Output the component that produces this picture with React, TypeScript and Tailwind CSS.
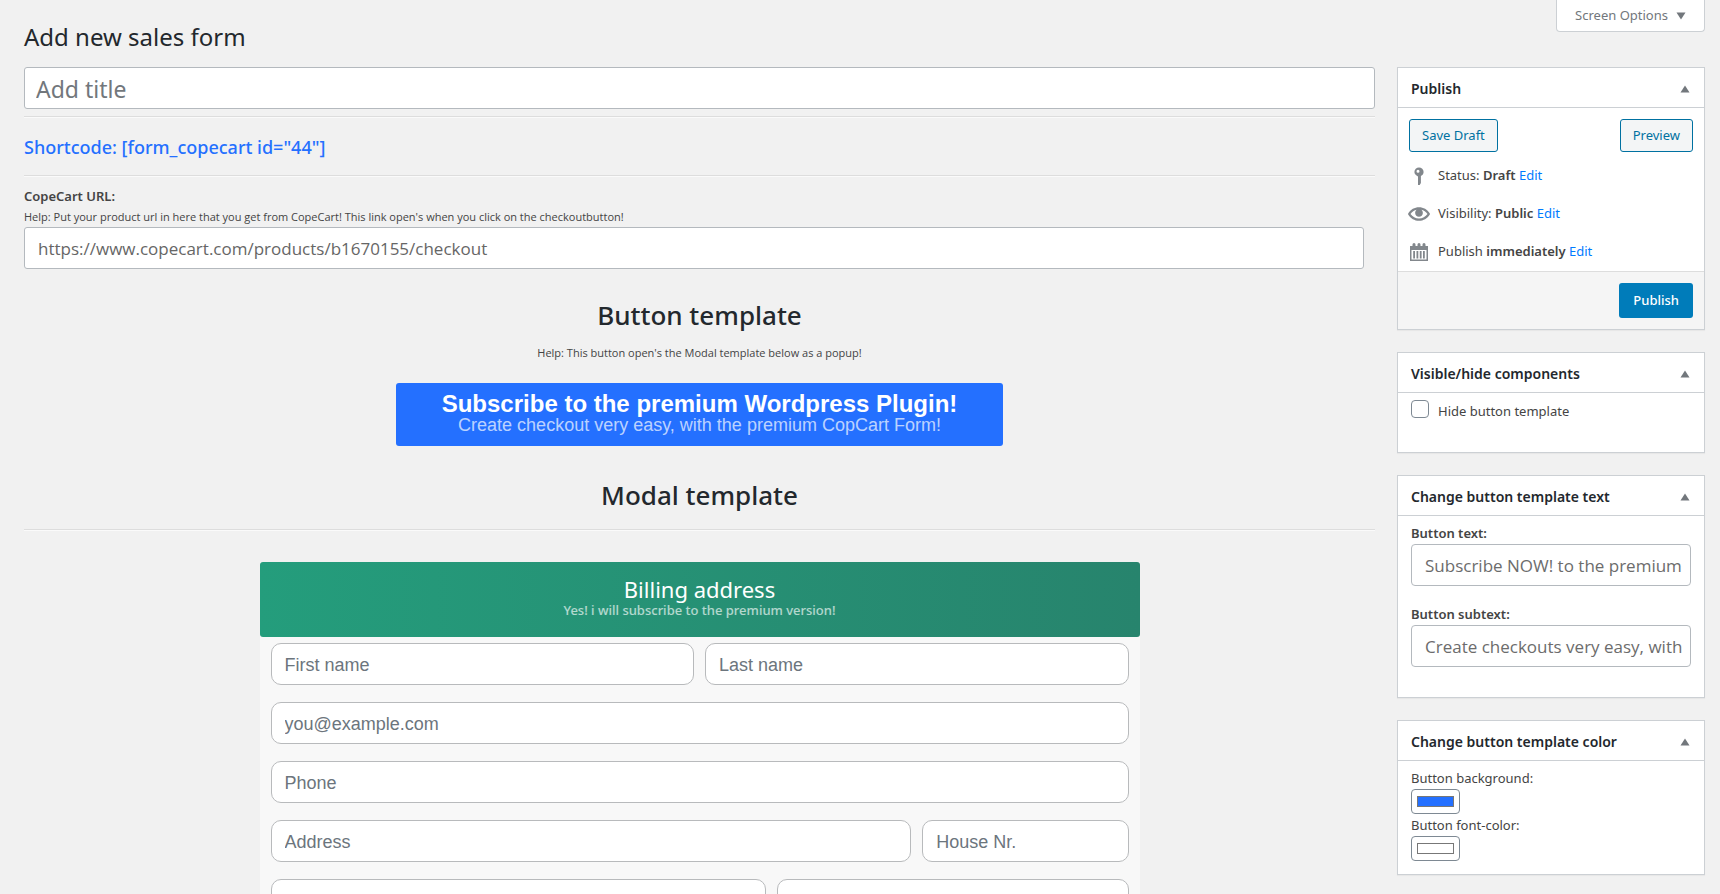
import { useState } from "react";
import type { ReactNode } from "react";

const FONT = "font-['Noto_Sans','Open_Sans',sans-serif]";

function PinIcon() {
  return (
    <svg viewBox="0 0 20 20" className="size-5 shrink-0 fill-[#82878c]" aria-hidden="true">
      <path
        fillRule="evenodd"
        d="M10 1.5a4.6 4.6 0 0 1 4.6 4.6c0 1.9-1.1 3.3-2.7 4V17l-1.2 2H9v-8.600C6.900 9.700 5.400 8 5.400 6.100A4.600 4.600 0 0 1 10 1.500zM9 3.700a1.500 1.500 0 1 0 0 3 1.500 1.500 0 0 0 0-3z"
      />
    </svg>
  );
}

function EyeIcon() {
  return (
    <svg viewBox="0 0 20 20" className="size-[22px] shrink-0 fill-[#82878c]" aria-hidden="true">
      <path d="M19.7 9.4C17.7 6 14 3.9 10 3.9S2.3 6 .3 9.4L0 10l.3.6c2 3.4 5.7 5.5 9.7 5.5s7.7-2.1 9.7-5.500l.3-.6-.3-.6zM10 14.100c-3.100 0-6-1.600-7.700-4.100C3.600 8 5.700 6.600 8 6.100c-.9.6-1.500 1.700-1.500 2.900 0 1.900 1.600 3.500 3.500 3.500s3.500-1.600 3.500-3.500c0-1.200-.6-2.300-1.500-2.900 2.300.5 4.400 1.900 5.700 3.900-1.700 2.500-4.600 4.100-7.700 4.100z" />
    </svg>
  );
}

function CalendarIcon() {
  return (
    <svg viewBox="0 0 20 20" className="size-5 shrink-0 fill-[#82878c]" aria-hidden="true">
      <path
        fillRule="evenodd"
        d="M1 4h2.500V2.500a1.500 1.500 0 0 1 3 0V4h2V2.500a1.500 1.500 0 0 1 3 0V4h2V2.500a1.500 1.500 0 0 1 3 0V4H19v15H1zM2.500 8v9.500h15V8zM4.200 9h1.800v7.500H4.200zM7.500 9h1.800v7.500H7.500zM10.800 9h1.800v7.500h-1.800zM14 9h1.800v7.500H14z"
      />
    </svg>
  );
}

function Panel({ title, children }: { title: string; children: ReactNode }) {
  const [open, setOpen] = useState(true);
  return (
    <section className="border border-[#ccd0d4] bg-white shadow-[0_1px_1px_rgba(0,0,0,0.04)]">
      <div className="flex h-10 items-center justify-between border-b border-[#ccd0d4] pt-0.5 pr-[14px] pl-[13px]">
        <h2 className="text-[14px] leading-5 font-semibold text-[#23282d]">{title}</h2>
        <button type="button" aria-label={`Toggle ${title}`} aria-expanded={open} onClick={() => setOpen(!open)}>
          <svg viewBox="0 0 10 8" className="h-2 w-[10px] fill-[#72777c]" aria-hidden="true">
            <path d="M5 .5 9.5 7.500h-9z" />
          </svg>
        </button>
      </div>
      {open && children}
    </section>
  );
}

function StatusRow({ icon, label, value }: { icon: ReactNode; label: string; value: string }) {
  return (
    <div className="flex h-[18px] items-center gap-2">
      <span className="flex w-[22px] justify-center">{icon}</span>
      <p>
        {label} <b className="font-semibold">{value}</b>{" "}
        <a href="#edit" className="text-[#007bff]">
          Edit
        </a>
      </p>
    </div>
  );
}

function SideField({ id, label, placeholder }: { id: string; label: string; placeholder: string }) {
  return (
    <div>
      <label htmlFor={id} className="block h-[22px] text-[13px] leading-[22px] font-semibold">
        {label}
      </label>
      <input
        id={id}
        type="text"
        placeholder={placeholder}
        className="block h-[42px] w-full rounded-[4px] border border-[#b4b9be] bg-white pr-1 pl-[13px] font-['Open_Sans',sans-serif] text-[17px] text-[#666] placeholder:text-[#6c6c6c]"
      />
    </div>
  );
}

function ColorField({ id, label, value }: { id: string; label: string; value: string }) {
  const [color, setColor] = useState(value);
  return (
    <div>
      <label htmlFor={id} className="block h-[22px] text-[13px] leading-[22px]">
        {label}
      </label>
      <input
        id={id}
        type="color"
        value={color}
        onChange={(e) => setColor(e.target.value)}
        className="block h-[25px] w-[49px] rounded-[4px] border border-[#7e8993] bg-white px-[3px] py-[2px]"
      />
    </div>
  );
}

function BillingField({
  label,
  span,
  type = "text",
  placeholder = label,
}: {
  label: string;
  span: string;
  type?: string;
  placeholder?: string;
}) {
  return (
    <input
      type={type}
      aria-label={label}
      placeholder={placeholder}
      className={`${span} h-[42px] min-w-0 rounded-[10px] border border-[#b8babc] bg-white px-[13px] pt-0.5 font-['Liberation_Sans',sans-serif] text-[18px] text-[#495057] placeholder:text-[#6c757d]`}
    />
  );
}

const rule = "border-t border-b border-t-[#dddddd] border-b-[#fafafa]";
const help = "font-['Open_Sans',sans-serif] text-[11px]";
const outlineButton = "h-[33px] rounded-[3px] border border-[#0071a1] bg-[#f3f5f6] px-3 text-[13px] text-[#0071a1]";

export default function App() {
  return (
    <div className={`h-screen overflow-hidden bg-[#f1f1f1] pr-[15px] pl-6 text-[13px] text-[#444] ${FONT}`}>
      <header className="flex h-[67px] items-start justify-between">
        <h1 className="mt-[21px] text-[24px] leading-8 text-[#23282d]">Add new sales form</h1>
        <button
          type="button"
          className="flex h-8 items-center gap-2 rounded-b-[4px] border border-t-0 border-[#ccd0d4] bg-white px-[18px] text-[13px] text-[#72777c]"
        >
          Screen Options
          <svg viewBox="0 0 10 8" className="h-2 w-[10px] fill-[#72777c]" aria-hidden="true">
            <path d="M.5.5h9L5 7.500z" />
          </svg>
        </button>
      </header>

      <div className="flex items-start gap-[22px]">
        <main className="min-w-0 flex-1">
          <input
            type="text"
            aria-label="Add title"
            placeholder="Add title"
            className="block h-[42px] w-full rounded-[3px] border border-[#b4b9be] bg-white px-[11px] pt-0.5 text-[23px] placeholder:text-[#72777c]"
          />
          <hr className={`mt-[7px] ${rule}`} />
          <p className="pt-[15px] pb-[13px] text-[18px] leading-[29px] font-medium text-[#2470ff]">
            Shortcode: [form_copecart id="44"]
          </p>
          <hr className={rule} />

          <div className="pt-[9px] pr-[11px]">
            <label htmlFor="url" className="block text-[13px] leading-[21px] font-semibold">
              CopeCart URL:
            </label>
            <p className={`pb-px leading-[19px] ${help}`}>
              Help: Put your product url in here that you get from CopeCart! This link open's when you click on the
              checkoutbutton!
            </p>
            <input
              id="url"
              type="url"
              defaultValue="https://www.copecart.com/products/b1670155/checkout"
              className="block h-[42px] w-full rounded-[3px] border border-[#b4b9be] bg-white px-[13px] font-['Open_Sans',sans-serif] text-[17px] text-[#666]"
            />
          </div>

          <section className="flex flex-col items-center pt-7">
            <h2 className="text-[26px] leading-9 font-medium text-[#23282d]">Button template</h2>
            <p className={`mt-[10px] leading-5 ${help}`}>Help: This button open's the Modal template below as a popup!</p>
            <button
              type="button"
              className="mt-5 flex h-[63px] w-[45%] flex-col items-center rounded-[3px] bg-[#2470ff] pt-[9px] font-['Liberation_Sans',sans-serif]"
            >
              <span className="text-[24px] leading-6 font-bold text-white">
                Subscribe to the premium Wordpress Plugin!
              </span>
              <span className="text-[18px] leading-[18px] text-white/70">
                Create checkout very easy, with the premium CopCart Form!
              </span>
            </button>
            <h2 className="mt-[31px] text-[26px] leading-9 font-medium text-[#23282d]">Modal template</h2>
          </section>
          <hr className={`mt-4 ${rule}`} />

          <form className="mx-auto mt-[31px] w-[880px] max-w-full bg-[#f8f8f8]">
            <div className="flex h-[75px] flex-col items-center rounded-[3px] bg-linear-to-r from-[#249d7c] to-[#27846d] pt-[13px]">
              <h3 className="text-[22px] leading-7 text-white">Billing address</h3>
              <p className="text-[13px] leading-[14px] font-medium text-white/65">
                Yes! i will subscribe to the premium version!
              </p>
            </div>
            <div className="grid grid-cols-12 gap-x-[11px] gap-y-[17px] px-[11px] pt-[6px] pb-5">
              <BillingField label="First name" span="col-span-6" />
              <BillingField label="Last name" span="col-span-6" />
              <BillingField label="you@example.com" span="col-span-12" type="email" />
              <BillingField label="Phone" span="col-span-12" type="tel" />
              <BillingField label="Address" span="col-span-9" />
              <BillingField label="House Nr." span="col-span-3" />
              <BillingField label="City" span="col-span-7" placeholder="" />
              <BillingField label="Postal code" span="col-span-5" placeholder="" />
            </div>
          </form>
        </main>

        <aside className="flex w-[308px] shrink-0 flex-col gap-[22px]">
          <Panel title="Publish">
            <div className="flex justify-between px-[11px] pt-[11px]">
              <button type="button" className={outlineButton}>
                Save Draft
              </button>
              <button type="button" className={outlineButton}>
                Preview
              </button>
            </div>
            <div className="flex flex-col gap-5 px-[10px] pt-[15px] pb-[10px]">
              <StatusRow icon={<PinIcon />} label="Status:" value="Draft" />
              <StatusRow icon={<EyeIcon />} label="Visibility:" value="Public" />
              <StatusRow icon={<CalendarIcon />} label="Publish" value="immediately" />
            </div>
            <div className="flex justify-end border-t border-[#dddddd] bg-[#f5f5f5] p-[11px]">
              <button type="button" className="h-[35px] rounded-[3px] bg-[#007cba] px-[14px] text-[13px] font-medium text-white">
                Publish
              </button>
            </div>
          </Panel>

          <Panel title="Visible/hide components">
            <div className="flex h-[59px] items-start gap-[9px] px-[13px] pt-[7px]">
              <input
                id="hide"
                type="checkbox"
                className="size-[18px] appearance-none rounded-[4px] border border-[#7e8993] bg-white checked:bg-[#007cba]"
              />
              <label htmlFor="hide" className="pt-px leading-5">
                Hide button template
              </label>
            </div>
          </Panel>

          <Panel title="Change button template text">
            <div className="flex flex-col gap-[17px] px-[13px] pt-[6px] pb-[30px]">
              <SideField id="btn-text" label="Button text:" placeholder="Subscribe NOW! to the premium" />
              <SideField id="btn-subtext" label="Button subtext:" placeholder="Create checkouts very easy, with" />
            </div>
          </Panel>

          <Panel title="Change button template color">
            <div className="flex flex-col px-[13px] pt-[6px] pb-[13px]">
              <ColorField id="btn-bg" label="Button background:" value="#2470ff" />
              <ColorField id="btn-fg" label="Button font-color:" value="#ffffff" />
            </div>
          </Panel>
        </aside>
      </div>
    </div>
  );
}
